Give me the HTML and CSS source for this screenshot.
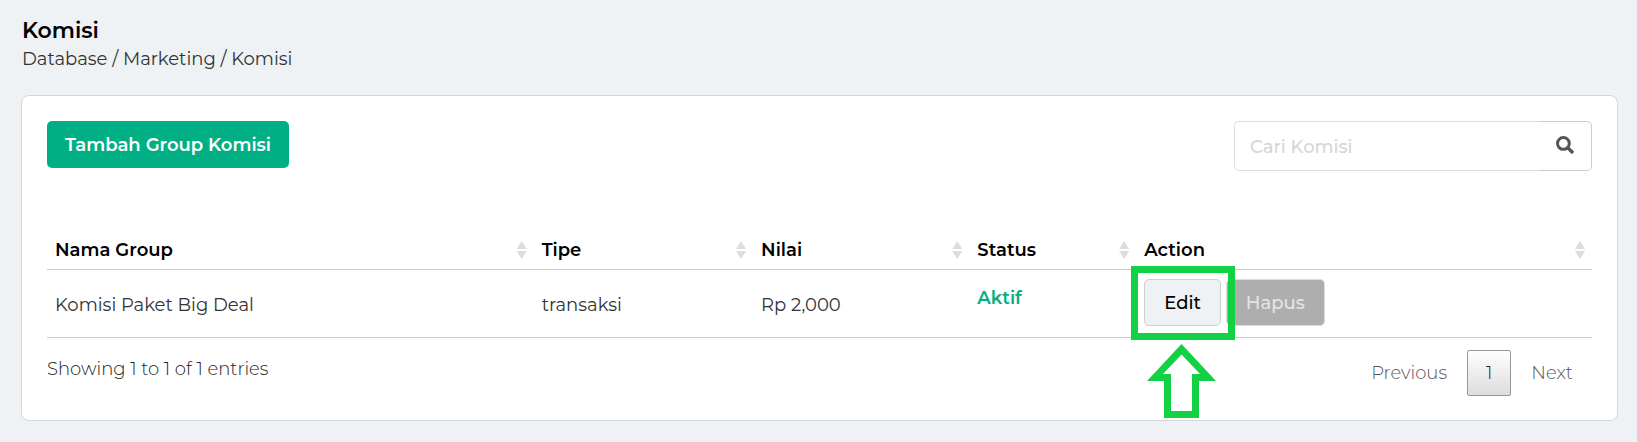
FILE: index.html
```html
<!DOCTYPE html>
<html lang="id">
<head>
  <meta charset="UTF-8" />
  <meta name="viewport" content="width=device-width, initial-scale=1" />
  <title>Komisi</title>
  <link rel="stylesheet" href="styles.css">
</head>
<body>
  <header class="page-header">
    <h1>Komisi</h1>
    <p class="breadcrumb">Database / Marketing / Komisi</p>
  </header>

  <main class="card">
    <div class="toolbar">
      <button type="button" class="btn btn-primary">Tambah Group Komisi</button>
      <form class="search">
        <input type="search" class="search-input" placeholder="Cari Komisi" aria-label="Cari Komisi" />
        <button type="button" class="search-btn" aria-label="Cari">
          <svg width="18" height="18" viewBox="0 0 18 18" fill="none" stroke="#555" stroke-width="3">
            <circle cx="7.4" cy="7.4" r="5.9" />
            <path d="M11.6 11.6L17 17" stroke-width="3.4" />
          </svg>
        </button>
      </form>
    </div>

    <table class="data-table">
      <colgroup>
        <col class="col-name" />
        <col class="col-type" />
        <col class="col-value" />
        <col class="col-status" />
        <col class="col-action" />
      </colgroup>
      <thead>
        <tr>
          <th><div class="sort">Nama Group</div></th>
          <th><div class="sort">Tipe</div></th>
          <th><div class="sort">Nilai</div></th>
          <th><div class="sort">Status</div></th>
          <th><div class="sort">Action</div></th>
        </tr>
      </thead>
      <tbody>
        <tr>
          <td>Komisi Paket Big Deal</td>
          <td>transaksi</td>
          <td>Rp 2,000</td>
          <td class="status">Aktif</td>
          <td class="action-cell">
            <div class="actions">
              <div class="edit-wrap">
                <button type="button" class="btn btn-edit">Edit</button>
                <span class="highlight"></span>
                <svg class="arrow" width="69" height="74" viewBox="0 0 69 74">
                  <path fill="#12d145" fill-rule="evenodd" d="M34.5 0L69 37H52V74H17V37H0ZM34.5 10.5L16 30H24V67H45V30H53Z" />
                </svg>
              </div>
              <button type="button" class="btn btn-delete" disabled>Hapus</button>
            </div>
          </td>
        </tr>
      </tbody>
    </table>

    <div class="table-footer">
      <div class="info">Showing 1 to 1 of 1 entries</div>
      <nav class="pagination">
        <a href="#" class="page">Previous</a>
        <a href="#" class="page current">1</a>
        <a href="#" class="page">Next</a>
      </nav>
    </div>
  </main>
</body>
</html>
```

FILE: styles.css
```css
* {
  box-sizing: border-box;
}
body {
  margin: 0;
  padding: 16px 19px 21px 21px;
  background: #eef2f5;
  color: #333;
  font-family: Montserrat, Inter, sans-serif;
  font-size: 18px;
  line-height: 28px;
}
button,
input {
  font-family: inherit;
  font-size: inherit;
}
.page-header {
  padding-left: 1px;
  margin-bottom: 22px;
}
h1 {
  margin: 0;
  color: #000;
  font-size: 22px;
  font-weight: 600;
  line-height: 29px;
}
.breadcrumb {
  margin: 0;
}
.card {
  padding: 25px 25px 24px;
  background: #fff;
  border: 1px solid #d3d7db;
  border-radius: 8px;
}
.toolbar {
  display: flex;
  justify-content: space-between;
  align-items: flex-start;
  margin-bottom: 60px;
}
.btn {
  height: 47px;
  padding: 0 19px;
  border: 1px solid transparent;
  border-radius: 5px;
  font-weight: 500;
  cursor: pointer;
}
.btn-primary {
  padding: 0 17px;
  background: #00af83;
  color: #fff;
  font-weight: 600;
}
.search {
  display: flex;
  width: 358px;
  height: 50px;
}
.search-input {
  flex: 1;
  min-width: 0;
  padding: 2px 15px 0;
  border: 1px solid #ddd;
  border-right: 0;
  border-radius: 5px 0 0 5px;
}
.search-input::placeholder {
  color: #d6d6d6;
  opacity: 1;
  font-weight: 500;
}
.search-btn {
  width: 53px;
  padding: 0 0 3px;
  background: #fff;
  border: 1px solid #ccc;
  border-left: 0;
  border-radius: 0 5px 5px 0;
  cursor: pointer;
}
.search-btn svg {
  display: block;
  margin: auto;
}
.data-table {
  width: 100%;
  table-layout: fixed;
  border-collapse: separate;
  border-spacing: 0;
}
.col-name {
  width: 31.5%;
}
.col-type {
  width: 14.2%;
}
.col-value {
  width: 14%;
}
.col-status {
  width: 10.8%;
}
.data-table th {
  padding: 5px 7px 5px 8px;
  border-bottom: 1px solid #ccc;
  color: #000;
  font-weight: 600;
  text-align: left;
}
.sort {
  display: flex;
  justify-content: space-between;
  align-items: center;
}
/* up and down triangles */
.sort::after {
  content: "";
  width: 10px;
  height: 18px;
  background: #ddd;
  clip-path: polygon(50% 0, 100% 8px, 0 8px, 0 10px, 100% 10px, 50% 100%, 0 10px, 0 8px);
}
.data-table td {
  padding: 12px 8px 10px;
  border-bottom: 1px solid #ccc;
}
.data-table .status {
  padding-bottom: 24px;
  color: #00af83;
  font-weight: 600;
}
.data-table .action-cell {
  padding: 9px 8px 11px;
}
.actions {
  display: flex;
  gap: 5px;
}
.edit-wrap {
  position: relative;
}
.btn-edit {
  display: block;
  background: #eef2f5;
  border-color: #ccd0d4;
  color: #000;
}
.btn-delete {
  background: #aeaeae;
  border-color: #ddd;
  color: #e4e4e4;
  cursor: default;
}
.highlight {
  position: absolute;
  inset: -13px -14px -14px -13px;
  border: 7px solid #12d145;
  pointer-events: none;
}
.arrow {
  position: absolute;
  top: 65px;
  left: 3px;
}
.table-footer {
  display: flex;
  justify-content: space-between;
  align-items: flex-start;
  padding-top: 12px;
  font-weight: 300;
}
.info {
  padding-top: 5px;
  color: #222;
}
.pagination {
  display: flex;
  gap: 1px;
}
.page {
  padding: 8px 18px;
  border: 1px solid transparent;
  border-radius: 2px;
  color: #555;
  text-decoration: none;
}
.page.current {
  background: linear-gradient(#fff, #dcdcdc);
  border-color: #979797;
  color: #222;
}
```
